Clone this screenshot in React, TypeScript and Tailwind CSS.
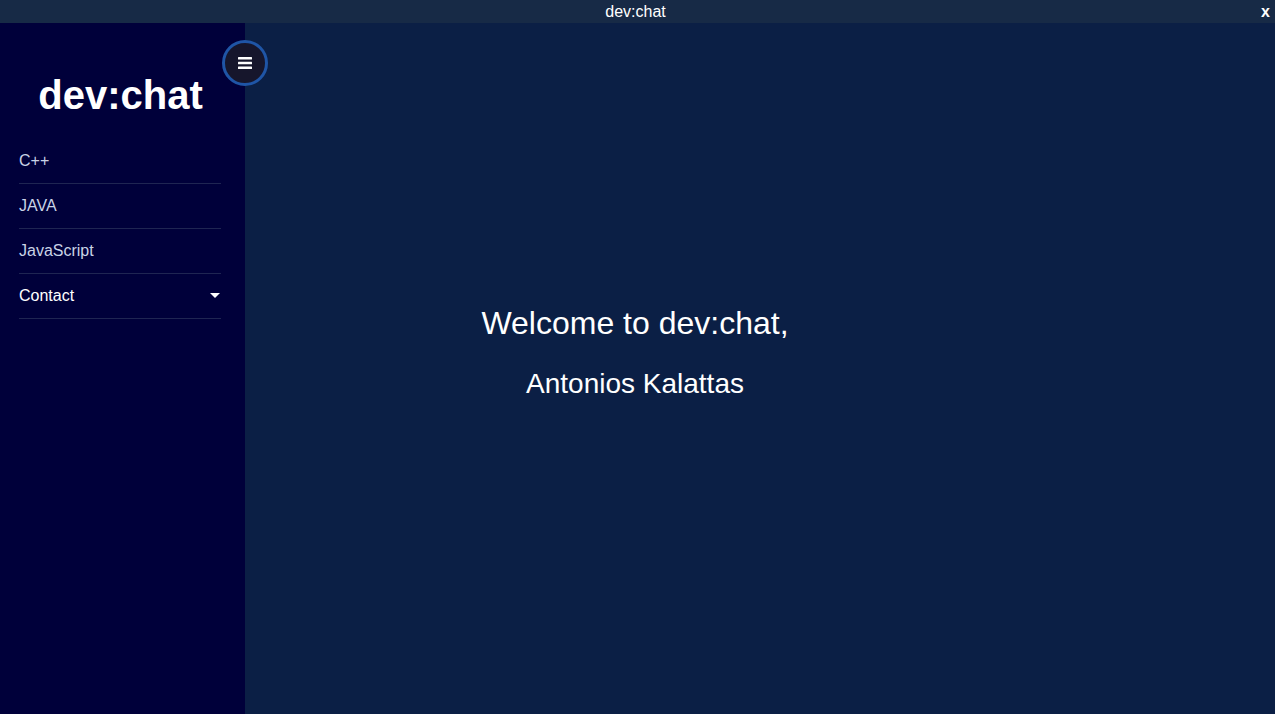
const links = ["C++", "JAVA", "JavaScript"];

function MenuButton() {
  return (
    <div className="absolute left-[222px] top-[17px] w-[46px] h-[46px] rounded-full bg-[#16162c] border-[3px] border-[#1f55a6] flex items-center justify-center z-10">
      <svg width="14" height="12" viewBox="0 0 14 12">
        <rect x="0" y="0" width="14" height="2.4" rx="0.5" fill="#fff" />
        <rect x="0" y="4.8" width="14" height="2.4" rx="0.5" fill="#fff" />
        <rect x="0" y="9.6" width="14" height="2.4" rx="0.5" fill="#fff" />
      </svg>
    </div>
  );
}

export default function App() {
  return (
    <div className="w-[1275px] h-[714px] flex flex-col overflow-hidden font-['Liberation_Sans',Arial,sans-serif] text-white">
      {/* title bar */}
      <div className="h-[23px] bg-[#172a46] flex items-center relative shrink-0">
        <div className="flex-1 text-center text-[16px] leading-[23px] pr-[4px]">dev:chat</div>
        <span className="absolute right-[5px] top-0 text-[16px] leading-[23px] font-bold">x</span>
      </div>
      <div className="flex flex-1 relative">
        <aside className="w-[245px] bg-[#00003a] shrink-0 px-[19px] pr-[24px]">
          <h1 className="text-center font-bold text-[40px] leading-[46px] mt-[49px] mb-[21px] pl-[1px]">
            dev:chat
          </h1>
          <nav className="flex flex-col">
            {links.map((l) => (
              <a
                key={l}
                className="h-[45px] flex items-center border-b border-[#1f2552] text-[16px] text-[#c9d3e6] pb-[1px]"
              >
                {l}
              </a>
            ))}
            <a className="h-[45px] flex items-center justify-between border-b border-[#1f2552] text-[16px] text-white pb-[1px]">
              Contact
              <svg width="10" height="6" viewBox="0 0 10 6" className="mr-[1px]">
                <path d="M0 0h10L5 5z" fill="#fff" />
              </svg>
            </a>
          </nav>
        </aside>
        <MenuButton />
        <main className="flex-1 bg-[#0b1f45] flex flex-col items-center pr-[250px] pt-[281px]">
          <p className="text-[32px] leading-[38px]">Welcome to dev:chat,</p>
          <p className="text-[28px] leading-[32px] mt-[26px]">Antonios Kalattas</p>
        </main>
      </div>
    </div>
  );
}
